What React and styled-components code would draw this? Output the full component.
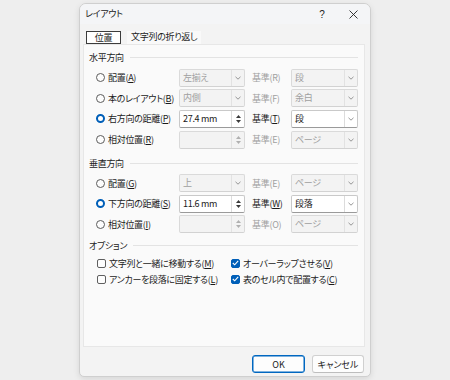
import React from 'react';
import styled, { createGlobalStyle, css } from 'styled-components';

const GlobalStyle = createGlobalStyle`
	html, body {
		margin: 0;
		padding: 0;
		background: #eeeeee;
	}
	body {
		font-family: "Noto Sans CJK JP", "Noto Sans", sans-serif;
		font-size: 9px;
		font-feature-settings: "palt";
		letter-spacing: -0.3px;
		color: #1a1a1a;
	}
`;

const Page = styled.div`
	height: 380px;
	padding-top: 3px;
	box-sizing: border-box;
`;

const Window = styled.div`
	width: 292px;
	height: 374px;
	box-sizing: border-box;
	margin: 0 auto;
	border: 1px solid #cfcfcf;
	border-radius: 7px 7px 5px 5px;
	background: #f3f3f3;
	box-shadow: 0 2px 6px rgba(0, 0, 0, 0.1);
	display: flex;
	flex-direction: column;
	overflow: hidden;
`;

const TitleBar = styled.div`
	height: 20px;
	display: flex;
	align-items: center;
	padding: 0 2px 0 5px;
	background: #f4f5f7;
`;

const Title = styled.span`
	flex: 1;
	line-height: 20px;
`;

const TitleButton = styled.span`
	width: ${(p) => p.$w}px;
	height: 20px;
	display: flex;
	align-items: center;
	justify-content: center;
	font-family: "Liberation Sans", sans-serif;
	font-size: 10px;
	color: #222;
	margin-left: ${(p) => p.$ml || 0}px;
`;

const TabStrip = styled.div`
	display: flex;
	gap: 6px;
	height: 13px;
	margin: 7px 0 0 6px;
`;

const Tab = styled.div`
	box-sizing: border-box;
	height: 13px;
	line-height: 11px;
	padding: 0 4px;
	background: #f9f9f9;
	${(p) => p.$active && css`
		width: 35px;
		text-align: center;
		background: #ffffff;
		border: 1px solid #3c3c3c;
	`}
`;

const Panel = styled.div`
	flex: 1;
	margin: 0 5px 0 3px;
	background: #fafafa;
	border: 1px solid #e7e7e7;
	padding: 6px 6px 0 5px;
`;

const Section = styled.div`
	margin-top: ${(p) => p.$gap || 0}px;
`;

const SectionHead = styled.div`
	display: flex;
	align-items: center;
	gap: 6px;
	height: 13px;
	line-height: 13px;

	&::after {
		content: "";
		flex: 1;
		height: 1px;
		background: #e3e3e3;
	}
`;

const ControlGrid = styled.div`
	display: grid;
	grid-template-columns: 83px 66px 46px 67px;
	grid-auto-rows: 18px;
	row-gap: 2.7px;
	align-items: center;
	padding-left: 7px;
	margin-top: 4.5px;
`;

const OptionGrid = styled.div`
	display: grid;
	grid-template-columns: 134px 1fr;
	grid-auto-rows: 14px;
	row-gap: 2px;
	align-items: center;
	padding-left: 8px;
	margin-top: 4px;
`;

const Choice = styled.label`
	display: flex;
	align-items: center;
	gap: 3px;
	white-space: nowrap;
`;

const RadioDot = styled.span`
	width: 9px;
	height: 9px;
	box-sizing: border-box;
	border-radius: 50%;
	background: #fdfdfd;
	border: 1px solid #5c5c5c;
	flex: none;
	${(p) => p.$checked && css`
		border: 2.6px solid #005fb8;
		background: #ffffff;
	`}
`;

const CheckBox = styled.span`
	width: 9px;
	height: 9px;
	box-sizing: border-box;
	border-radius: 2px;
	border: 1px solid #5f5f5f;
	background: #fdfdfd;
	flex: none;
	display: flex;
	align-items: center;
	justify-content: center;
	${(p) => p.$checked && css`
		border-color: #005fb8;
		background: #005fb8;
	`}
`;

const Key = styled.span`
	text-decoration: ${(p) => (p.$plain ? 'none' : 'underline')};
	text-underline-offset: 1px;
`;

const BasisLabel = styled.span`
	padding-left: 7px;
	white-space: nowrap;
	color: ${(p) => (p.$disabled ? '#a0a0a0' : '#1a1a1a')};
`;

const Field = styled.div`
	height: 18px;
	box-sizing: border-box;
	display: flex;
	border: 1px solid ${(p) => (p.$disabled ? '#dadada' : '#c9c9c9')};
	border-bottom-color: ${(p) => (p.$disabled ? '#d2d2d2' : '#9a9a9a')};
	border-radius: 2px;
	background: ${(p) => (p.$disabled ? '#f3f3f3' : '#ffffff')};
	color: ${(p) => (p.$disabled ? '#a0a0a0' : '#1a1a1a')};
`;

const FieldText = styled.span`
	flex: 1;
	padding-left: 3px;
	line-height: 16px;
	white-space: nowrap;
	overflow: hidden;
`;

const FieldSide = styled.span`
	width: ${(p) => p.$w}px;
	flex: none;
	border-left: 1px solid ${(p) => (p.$disabled ? '#e2e2e2' : '#dcdcdc')};
	display: flex;
	flex-direction: column;
	align-items: center;
	justify-content: center;
	gap: 2px;
`;

const Footer = styled.div`
	height: 29px;
	box-sizing: border-box;
	display: flex;
	justify-content: flex-end;
	align-items: flex-start;
	gap: 7px;
	padding: 8px 6px 0 0;
`;

const Button = styled.button`
	width: ${(p) => p.$w}px;
	height: 18px;
	box-sizing: border-box;
	padding: 0;
	font: inherit;
	font-size: 9px;
	color: #1a1a1a;
	background: #fdfdfd;
	border: 1px solid #d0d0d0;
	border-bottom-color: #bdbdbd;
	border-radius: 3px;
	${(p) => p.$primary && css`
		border: 1px solid #0067c0;
		box-shadow: inset 0 0 0 0.5px #0067c0;
	`}
`;

const Chevron = () => (
	<svg width="6" height="4" viewBox="0 0 6 4">
		<path d="M0.5 0.8 L3 3.2 L5.5 0.8" fill="none" stroke="#8a8a8a" strokeWidth="0.9" />
	</svg>
);

const SpinArrows = ({ disabled }) => {
	const fill = disabled ? '#b0b0b0' : '#3a3a3a';
	return (
		<>
			<svg width="5" height="3" viewBox="0 0 5 3"><path d="M2.5 0 L5 3 L0 3 Z" fill={fill} /></svg>
			<svg width="5" height="3" viewBox="0 0 5 3"><path d="M0 0 L5 0 L2.5 3 Z" fill={fill} /></svg>
		</>
	);
};

const Select = ({ value, disabled }) => (
	<Field $disabled={disabled}>
		<FieldText>{value}</FieldText>
		<FieldSide $w={12} $disabled={disabled}><Chevron /></FieldSide>
	</Field>
);

const Spin = ({ value, disabled }) => (
	<Field $disabled={disabled}>
		<FieldText>{value}</FieldText>
		<FieldSide $w={12} $disabled={disabled}><SpinArrows disabled={disabled} /></FieldSide>
	</Field>
);

const Radio = ({ label, k, checked }) => (
	<Choice>
		<RadioDot $checked={checked} />
		<span>{label}(<Key>{k}</Key>)</span>
	</Choice>
);

const Check = ({ label, k, checked }) => (
	<Choice>
		<CheckBox $checked={checked}>
			{checked && (
				<svg width="7" height="6" viewBox="0 0 7 6">
					<path d="M0.8 3 L2.7 4.8 L6.2 0.9" fill="none" stroke="#fff" strokeWidth="1.1" />
				</svg>
			)}
		</CheckBox>
		<span>{label}(<Key>{k}</Key>)</span>
	</Choice>
);

const Basis = ({ k, disabled }) => (
	<BasisLabel $disabled={disabled}>基準(<Key $plain={disabled}>{k}</Key>)</BasisLabel>
);

const horizontalRows = [
	{ label: '配置', k: 'A', ctrl: 'select', value: '左揃え', basis: 'R', basisValue: '段' },
	{ label: '本のレイアウト', k: 'B', ctrl: 'select', value: '内側', basis: 'F', basisValue: '余白' },
	{ label: '右方向の距離', k: 'P', ctrl: 'spin', value: '27.4 mm', basis: 'T', basisValue: '段', active: true },
	{ label: '相対位置', k: 'R', ctrl: 'spin', value: '', basis: 'E', basisValue: 'ページ' },
];

const verticalRows = [
	{ label: '配置', k: 'G', ctrl: 'select', value: '上', basis: 'E', basisValue: 'ページ' },
	{ label: '下方向の距離', k: 'S', ctrl: 'spin', value: '11.6 mm', basis: 'W', basisValue: '段落', active: true },
	{ label: '相対位置', k: 'I', ctrl: 'spin', value: '', basis: 'O', basisValue: 'ページ' },
];

const ControlRows = ({ rows }) => (
	<ControlGrid>
		{rows.map((row) => (
			<React.Fragment key={row.label + row.k}>
				<Radio label={row.label} k={row.k} checked={row.active} />
				{row.ctrl === 'spin'
					? <Spin value={row.value} disabled={!row.active} />
					: <Select value={row.value} disabled={!row.active} />}
				<Basis k={row.basis} disabled={!row.active} />
				<Select value={row.basisValue} disabled={!row.active} />
			</React.Fragment>
		))}
	</ControlGrid>
);

const App = () => (
	<Page>
		<GlobalStyle />
		<Window>
			<TitleBar>
				<Title>レイアウト</Title>
				<TitleButton $w={20}>?</TitleButton>
				<TitleButton $w={30} $ml={6}>
					<svg width="9" height="9" viewBox="0 0 9 9">
						<path d="M0.5 0.5 L8.5 8.5 M8.5 0.5 L0.5 8.5" stroke="#222" strokeWidth="0.9" />
					</svg>
				</TitleButton>
			</TitleBar>
			<TabStrip>
				<Tab $active>位置</Tab>
				<Tab>文字列の折り返し</Tab>
			</TabStrip>
			<Panel>
				<Section>
					<SectionHead>水平方向</SectionHead>
					<ControlRows rows={horizontalRows} />
				</Section>
				<Section $gap={8}>
					<SectionHead>垂直方向</SectionHead>
					<ControlRows rows={verticalRows} />
				</Section>
				<Section $gap={6}>
					<SectionHead>オプション</SectionHead>
					<OptionGrid>
						<Check label="文字列と一緒に移動する" k="M" />
						<Check label="オーバーラップさせる" k="V" checked />
						<Check label="アンカーを段落に固定する" k="L" />
						<Check label="表のセル内で配置する" k="C" checked />
					</OptionGrid>
				</Section>
			</Panel>
			<Footer>
				<Button $w={53} $primary>OK</Button>
				<Button $w={52}>キャンセル</Button>
			</Footer>
		</Window>
	</Page>
);

export default App;
